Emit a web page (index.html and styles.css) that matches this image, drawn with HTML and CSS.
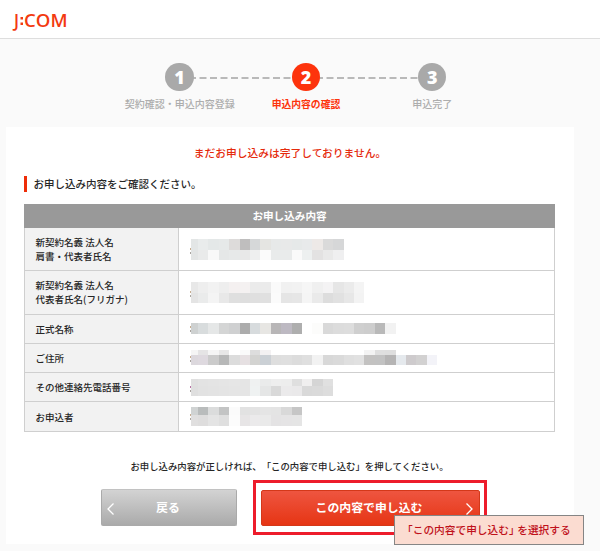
FILE: index.html
```html
<!DOCTYPE html>
<html lang="ja">
<head>
<meta charset="utf-8">
<title>J:COM お申し込み内容の確認</title>
<link rel="stylesheet" href="styles.css">
</head>
<body>
<header class="header">
  <svg class="logo" width="56" height="22" viewBox="0 0 56 22" role="img" aria-label="J:COM">
    <text x="3" y="16" textLength="5" lengthAdjust="spacingAndGlyphs">J</text>
    <path d="M9.500 6H12v2.500H9.500zM9.500 11.500H12V14H9.500z"/>
    <text x="13" y="16" textLength="43.500" lengthAdjust="spacingAndGlyphs">COM</text>
  </svg>
</header>
<nav class="steps">
  <svg class="track" width="240" height="4" viewBox="0 0 240 4"><path d="M0 2H115M127 2H240"/></svg>
  <div class="step"><span class="num">1</span><span class="label">契約確認・申込内容登録</span></div>
  <div class="step current"><span class="num">2</span><span class="label">申込内容の確認</span></div>
  <div class="step"><span class="num">3</span><span class="label">申込完了</span></div>
</nav>
<main class="panel">
  <p class="alert">まだお申し込みは完了しておりません。</p>
  <h1 class="title">お申し込み内容をご確認ください。</h1>
  <section class="table">
    <h2 class="caption">お申し込み内容</h2>
    <div class="row tall"><div class="key">新契約名義 法人名<br>肩書・代表者氏名</div><div class="value"><svg class="mosaic" data-row="0"></svg></div></div>
    <div class="row tall"><div class="key">新契約名義 法人名<br>代表者氏名(フリガナ)</div><div class="value"><svg class="mosaic" data-row="1"></svg></div></div>
    <div class="row"><div class="key">正式名称</div><div class="value"><svg class="mosaic" data-row="2"></svg></div></div>
    <div class="row"><div class="key">ご住所</div><div class="value"><svg class="mosaic" data-row="3"></svg></div></div>
    <div class="row"><div class="key">その他連絡先電話番号</div><div class="value"><svg class="mosaic" data-row="4"></svg></div></div>
    <div class="row"><div class="key">お申込者</div><div class="value"><svg class="mosaic" data-row="5"></svg></div></div>
  </section>
  <p class="note">お申し込み内容が正しければ、「この内容で申し込む」を押してください。</p>
  <div class="actions">
    <button class="button back"><svg width="9" height="14" viewBox="0 0 9 14"><path d="M7.5 1.5 2 7l5.500 5.500"/></svg>戻る</button>
    <div class="highlight">
      <button class="button submit">この内容で申し込む<svg width="9" height="14" viewBox="0 0 9 14"><path d="M1.500 1.500 7 7l-5.500 5.500"/></svg></button>
      <div class="callout">「この内容で申し込む<span class="close">」</span>を選択する</div>
    </div>
  </div>
</main>
<script src="mosaic.js"></script>
</body>
</html>
```
FILE: styles.css
```css
* { box-sizing: border-box; }
body {
  margin: 0;
  width: 600px;
  height: 551px;
  overflow: hidden;
  background: #fafafa;
  color: #262626;
  font-family: "Noto Sans CJK JP", sans-serif;
}
h1, h2, p { margin: 0; }
.header {
  height: 39px;
  padding: 11px 0 0 11px;
  background: #fff;
  border-bottom: 1px solid #dedede;
}
.logo {
  display: block;
  overflow: visible;
  fill: #f33a10;
  font: 600 18.5px "Open Sans", sans-serif;
}
.steps {
  position: relative;
  display: grid;
  grid-template-columns: repeat(3, 126.3px);
  padding: 23.500px 0 0 116.500px;
  height: 88px;
}
.track {
  position: absolute;
  left: 188.500px;
  top: 37px;
  fill: none;
  stroke: #b9b9b9;
  stroke-width: 2;
  stroke-dasharray: 7 3.5;
}
.step {
  position: relative;
  display: flex;
  flex-direction: column;
  align-items: center;
  color: #adadad;
}
.num {
  width: 28.500px;
  height: 28.500px;
  border-radius: 50%;
  background: #a9a9a9;
  color: #fff;
  font: 800 18px/29px "Open Sans", sans-serif;
  text-align: center;
}
.label {
  margin-top: 5px;
  font-size: 10px;
  font-weight: 500;
  line-height: 16px;
  white-space: nowrap;
}
.current .num { background: #fd330c; }
.current .label { color: #fd330c; font-weight: 700; font-size: 9.8px; }
.panel {
  width: 568px;
  height: 417px;
  margin-left: 6px;
  padding: 17px 18px 0;
  background: #fff;
}
.alert {
  color: #e52a0c;
  font-size: 10.75px;
  font-weight: 500;
  line-height: 17px;
  text-align: center;
}
.title {
  height: 16px;
  margin-top: 15px;
  padding-left: 6.500px;
  border-left: 3px solid #ee2d08;
  font-size: 10.500px;
  font-weight: 500;
  line-height: 15px;
}
.table {
  width: 531px;
  margin-top: 12px;
  border: 1px solid #cfcfcf;
  border-top: 0;
  height: 228px;
}
.caption {
  height: 24px;
  margin: 0 -1px;
  background: #999;
  color: #fff;
  font-size: 10.600px;
  font-weight: 700;
  line-height: 23px;
  text-align: center;
}
.row {
  display: grid;
  grid-template-columns: 154px 1fr;
  height: 29.250px;
  border-bottom: 1px solid #cfcfcf;
}
.row.tall { height: 43.250px; }
.row:last-child { height: 28.750px; border-bottom: 0; }
.key {
  display: flex;
  align-items: center;
  padding-left: 10.500px;
  background: #f2f2f2;
  border-right: 1px solid #cfcfcf;
  font-size: 9.500px;
  font-weight: 500;
  line-height: 14.200px;
  white-space: nowrap;
}
.value {
  display: flex;
  align-items: center;
  padding-left: 9.500px;
}
.mosaic { display: block; flex: none; }
.note {
  margin-top: 26px;
  padding-right: 1px;
  font-size: 9.400px;
  font-weight: 500;
  line-height: 17px;
  text-align: center;
  text-spacing-trim: space-all;
  white-space: nowrap;
}
.actions {
  display: flex;
  align-items: center;
  gap: 16px;
  margin-top: 5px;
  padding-left: 77px;
}
.button {
  position: relative;
  display: flex;
  align-items: center;
  justify-content: center;
  height: 36.500px;
  padding: 0 2px 3px 0;
  border-radius: 2px;
  color: #fff;
  font: 700 11.900px "Noto Sans CJK JP", sans-serif;
}
.button svg {
  position: absolute;
  top: 11.500px;
  fill: none;
  stroke: #fff;
  stroke-width: 1.300;
}
.back {
  width: 136px;
  border: 1px solid #aaa;
  border-top-color: #c2c2c2;
  background: linear-gradient(#d3d3d3, #aaa);
}
.back svg { left: 4px; }
.highlight {
  position: relative;
  width: 234px;
  height: 55px;
  padding: 6.500px 4.500px;
  border: 3px solid #ed1c2b;
}
.submit {
  width: 219px;
  border: 1px solid #d43819;
  background: linear-gradient(#ee5540, #e63514);
}
.submit svg { right: 5px; }
.callout {
  position: absolute;
  left: 138px;
  top: 32px;
  width: 190px;
  height: 30px;
  padding-left: 7px;
  border: 1px solid #858585;
  background: #fbdcd1;
  color: #c0111b;
  font-size: 10.700px;
  font-weight: 500;
  line-height: 28px;
  white-space: nowrap;
}
.close {
  padding-right: 3px;
  font-feature-settings: "halt";
}
```
FILE: mosaic.js
```js
// Masked values: each strip holds its top, height and one colour per cell ("-" = empty).
const rows = [
  { h: 21, strips: [
    [0, 10.5, "e3e6e6 e9ecec e4e8e8 e6e9e9 dddbda bfbebe d6d8d9 e5e5e2 e7e9e9 e8e9e9 e6e9e9 e8eaeb ede9e7 dadada d6d7d8"],
    [10.5, 10.5, "e3e5e5 e9eaea f8f8f8 e5e7e7 e7e9e9 e8e8e8 eeefef fbfbfb e9ebeb e9ebeb fafafa edf0f0 e3e2e2 e9e9e9 efeff0"]] },
  { h: 21, strips: [
    [0, 10.5, "e8e8e8 eeeeee f2f2f2 eeeeee f4f0f0 f4f1f1 ebebeb ebebeb fafafa f1f1f1 f2f2f2 f6f6f6 f0f0f0 f4f3f4 e6e6e6 ebebeb f4f4f4"],
    [10.5, 10.5, "e4e4e4 eaebeb f4f4f4 e8e8e8 dfdfdf dedede dfdfdf e0e0e0 fbfbfb e5e5e5 e6e6e6 f5f5f5 eaeaea dddddd e1e1e1 e7e7e7 f3f3f3"]] },
  { h: 10.5, strips: [
    [0, 10.5, "ced1d1 d8dcdd e5e7e7 d4d5d5 cfd0d1 acacac d7dbdd e7e6e3 b8b6b7 bdb9c2 aeaeae - fcfcfb d9d9d9 dcdcdc dddddd cfcfcf cdcdcd b9b9b9 f2f2f2"]] },
  { h: 15, strips: [
    [0, 4.5, "f5f5f5 e5e4e5 f5f5f5 e7e7e7 - fafafa dddddd f3f1f2 - - - - - - - - - f3f3f3 dfdfdf dedede"],
    [4.5, 10.5, "dcd8dd ded9df cbcbcb b7b8b8 dcdcdc e6e0e2 d3d3d1 cbd0d5 dedede dfdfdf dcdcdc dfdfdf f2f2f2 d8d8d8 dadada dfdfdf e1e1e1 c3c2c1 c2c2c2 b5b4b4 e5e9ed cecbcd d2d1d1 f3f3f8"]] },
  { h: 17, strips: [
    [0, 6.5, "e0e0e0 e3e3e3 e4e4e4 e5e5e5 e6e6e6 e5e5e5 eff1f1 eaebeb eeeeee ededed dfdfdf f0efef d5d5d5 e0e0e0"],
    [6.5, 10.5, "dfdfdf e2e2e2 e3e3e3 e4e4e4 e5e5e5 e5e5e5 eff2f2 e5e6e6 d9d9d9 ebeaeb eae9ea d9d9d9 dadada dddddd"]] },
  { h: 18.5, strips: [
    [0, 8, "d0d3d3 b9bcbc dbdcdc c3c4c4 fbfbfb e2e2e2 e3e3e3 e5e5e5 e4e4e4 d9d9d9 c6c6c6"],
    [8, 10.5, "e0dfdf dedddd e4e4e4 dfdfdf fcfcfc e7e5e6 ebeaeb eaeaea e4e3e4 e5e4e5 e5e5e5"]] }
];

const ns = "http://www.w3.org/2000/svg";
const first = 9;
const cell = 10.4;

function rect(svg, x, y, width, height, fill) {
  const node = document.createElementNS(ns, "rect");
  Object.entries({ x, y, width, height, fill }).forEach(([name, value]) => node.setAttribute(name, value));
  svg.appendChild(node);
}

document.querySelectorAll(".mosaic").forEach(svg => {
  const index = Number(svg.dataset.row);
  const row = rows[index];
  svg.setAttribute("width", 260);
  svg.setAttribute("height", row.h);
  svg.setAttribute("shape-rendering", "crispEdges");
  row.strips.forEach(([top, height, colours]) => {
    colours.split(" ").forEach((colour, i) => {
      if (colour === "-") return;
      const x = i ? first + (i - 1) * cell : 2;
      rect(svg, x, top, i ? cell : first - 2, height, "#" + colour);
    });
  });
  const mid = row.h / 2;
  rect(svg, 0.5, mid - 2, 1.5, 2, index === 4 ? "#b875a5" : "#c7ad91");
  rect(svg, 1, mid + 2, 1, 2, "#aaa5a0");
});
```
